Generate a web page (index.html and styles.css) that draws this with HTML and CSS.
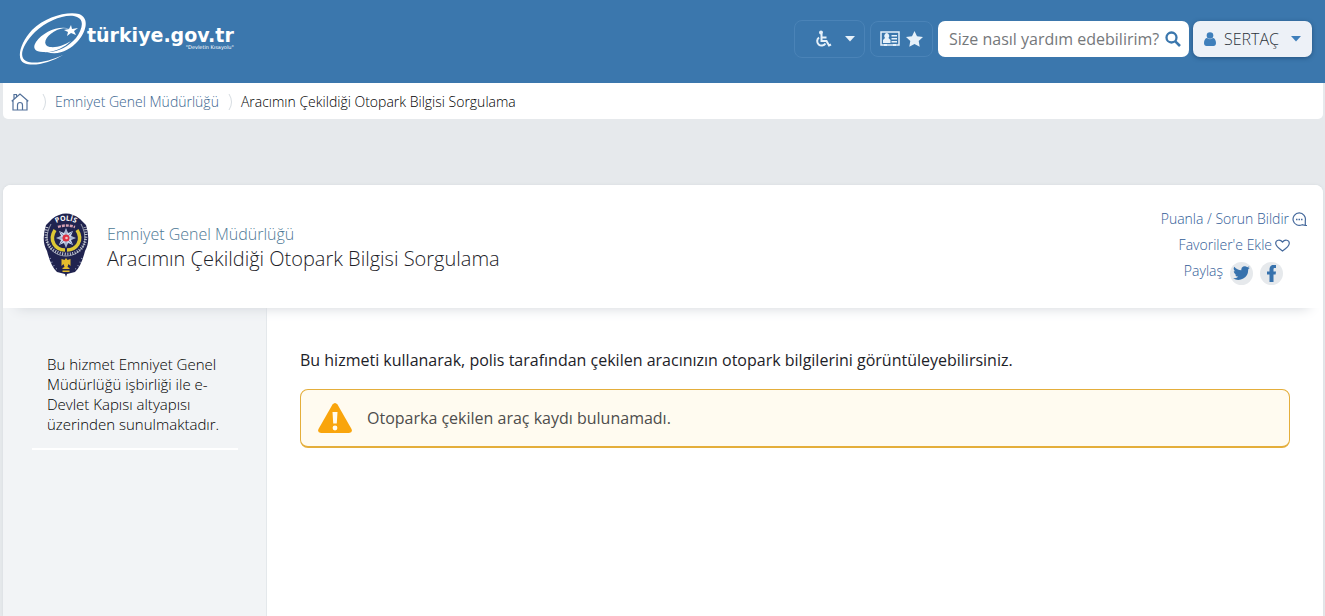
FILE: index.html
```html
<!DOCTYPE html>
<html lang="tr">
<head>
<meta charset="utf-8">
<meta name="viewport" content="width=device-width, initial-scale=1">
<title>Aracımın Çekildiği Otopark Bilgisi Sorgulama</title>
<link rel="stylesheet" href="styles.css">
</head>
<body>
<header class="topbar">
  <a class="brand" href="#" aria-label="türkiye.gov.tr">
    <svg class="brand-mark" viewBox="0 0 68 54" aria-hidden="true">
      <path fill="#fff" d="M44 43C31 51 14 55 5 51C-3 47 1 31 13 18C26 5 48-1 60 2C71 6 67 20 59 29C51 38 39 44 28 40C37 41 49 35 57 26C63 18 66 8 58 5C48 1 29 8 16 20C4 32-1 45 7 49C15 53 31 49 44 43Z"/>
      <path fill="#fff" d="M51 17C40 13 24 20 17 30C13 36 16 40 24 40C34 41 45 36 52 29C44 34 34 37 28 34C23 30 29 22 38 18C43 16 47 16 51 17Z"/>
      <path fill="#fff" d="M52 13L53 17L59 16L55 19L57 23L52 21L48 24L49 20L45 18L50 17Z"/>
    </svg>
    <span class="brand-text">
      <span class="brand-name">türkiye.gov.tr</span>
      <span class="brand-motto">"Devletin Kısayolu"</span>
    </span>
  </a>
  <div class="tools">
    <button class="ghost ghost-access" type="button" aria-label="Erişilebilirlik">
      <svg width="18" height="18" viewBox="0 0 18 18" fill="none" stroke="#e6f1fa" stroke-width="2" aria-hidden="true"><circle cx="7" cy="2.500" r="2" fill="#e6f1fa" stroke="none"/><path d="M7.500 4v7h5l2.500 4.500 2-1M8 7.500h4.500M5 7.500a4.500 4.500 0 1 0 6.500 6"/></svg>
      <svg width="10" height="6" viewBox="0 0 10 6" aria-hidden="true"><path fill="#e6f1fa" d="M0 0h10L5 5.500z"/></svg>
    </button>
    <button class="ghost ghost-card" type="button" aria-label="Kartım ve favorilerim">
      <svg width="20" height="16" viewBox="0 0 20 16" aria-hidden="true"><path fill="none" stroke="#e6f1fa" stroke-width="1.500" d="M1 1h18v13H1z"/><path fill="#e6f1fa" d="M3 12V9l2-2a2.500 2.800 0 1 1 3.500 0l2 2v3zM11.500 4H17v1.500h-5.500zM11.500 7H17v1.500h-5.500zM11.500 10H17v1.500h-5.500zM4 13h3v2H4zM13 13h3v2h-3z"/></svg>
      <svg width="17" height="16" viewBox="0 0 17 16" aria-hidden="true"><path fill="#e6f1fa" d="M8.500 0l2.500 5.200 6 .8-4.300 4 1 5.800-5.200-2.800-5.200 2.800 1-5.800L0 6l6-.8z"/></svg>
    </button>
    <form class="search">
      <input class="search-input" type="text" aria-label="Arama" placeholder="Size nasıl yardım edebilirim?">
      <button class="search-button" type="button" aria-label="Ara">
        <svg width="16" height="16" viewBox="0 0 16 16" fill="none" stroke="#3b77ad" aria-hidden="true"><circle cx="6.500" cy="6.500" r="5" stroke-width="2.300"/><path stroke-width="2.600" d="M10.300 10.300L15 15"/></svg>
      </button>
    </form>
    <button class="user" type="button">
      <svg width="12" height="14" viewBox="0 0 12 14" aria-hidden="true"><circle cx="6" cy="3.500" r="3.300" fill="#3f7fbb"/><path fill="#3f7fbb" d="M0 11C0 8 1.500 6 3 6c1.800 1.500 4.200 1.500 6 0 1.500 0 3 2 3 5 0 2-1 3-2.500 3h-7C1 14 0 13 0 11z"/></svg>
      <span class="user-name">SERTAÇ</span>
      <svg width="10" height="6" viewBox="0 0 10 6" aria-hidden="true"><path fill="#3f7fbb" d="M0 0h10L5 5.500z"/></svg>
    </button>
  </div>
</header>

<div class="page">
  <nav class="crumbs" aria-label="Konum">
    <a class="home" href="#" aria-label="Ana sayfa">
      <svg width="18" height="18" viewBox="0 0 18 18" fill="none" stroke="#53719a" stroke-width="1.200" aria-hidden="true"><path d="M.7 8.300L9 1l8.300 7.300M2 7.500V17h14V7.500M6.500 17v-5a2.500 2.500 0 0 1 5 0v5M3 6V1.500h2.500V4"/></svg>
    </a>
    <svg class="sep" width="5" height="18" viewBox="0 0 5 18" fill="none" stroke="#d7dde2" aria-hidden="true"><path d="M1 1q5 8 0 16"/></svg>
    <a class="crumb" href="#">Emniyet Genel Müdürlüğü</a>
    <svg class="sep" width="5" height="18" viewBox="0 0 5 18" fill="none" stroke="#d7dde2" aria-hidden="true"><path d="M1 1q5 8 0 16"/></svg>
    <span class="crumb-current">Aracımın Çekildiği Otopark Bilgisi Sorgulama</span>
  </nav>

  <main class="card">
    <div class="title-bar">
      <svg class="badge" viewBox="0 0 46 64" role="img" aria-label="Polis">
        <defs><path id="badge-arc" d="M8 14Q23 1 38 14"/></defs>
        <path fill="#20234f" d="M9 6Q23-5 37 6L43 12Q48 28 42 38Q38 54 32 59L24 61L23 64L22 61L14 59Q8 54 4 38Q-2 28 3 12Z"/>
        <path fill="none" stroke="#989eae" stroke-width="1" d="M8 11C-3 32 11 43 23 43S49 32 38 11"/>
        <path fill="none" stroke="#c3c7d2" stroke-width="3" stroke-dasharray="1 1.500" d="M4 14C0 31 9 40 23 41S46 31 42 14"/>
        <text class="badge-word"><textPath href="#badge-arc" startOffset="50%">POLİS</textPath></text>
        <path fill="none" stroke="#ddc735" stroke-width="3.500" d="M12 17C5 28 13 37 22 37M34 17C41 28 33 37 24 37"/>
        <path fill="none" stroke="#d6a2b3" stroke-width="2.500" stroke-dasharray="3 1" d="M15 14Q23 11 32 14"/>
        <path fill="#c9d5e8" d="M23 15l2 5 5-2-2 5 5 2-5 2 2 5-5-2-2 5-2-5-5 2 2-5-5-2 5-2-2-5 5 2z"/>
        <path stroke="#6879a9" stroke-width=".7" d="M23 16v18M14 25h18M17 19l12 12M29 19L17 31"/>
        <circle cx="23" cy="25" r="3.500" fill="#df3142"/><circle cx="23.500" cy="25" r="1.300" fill="#f0c3c8"/>
        <path fill="#e4bd2e" d="M23 45l1.500 2 3-1v7l-2-2-1 3 2 1v1h-7v-1l2-1-1-3-2 2v-7l3 1zM19.500 57.500h7v1.500h-7z"/>
        <path fill="none" stroke="#8e96b4" stroke-width="1.500" stroke-dasharray="1 3" d="M7 45q5 12 9 12M39 45q-5 12-9 12"/>
      </svg>
      <h1 class="title">
        <span class="agency">Emniyet Genel Müdürlüğü</span>
        <span class="service">Aracımın Çekildiği Otopark Bilgisi Sorgulama</span>
      </h1>
      <div class="actions">
        <a class="action" href="#">Puanla / Sorun Bildir
          <svg width="15" height="15" viewBox="0 0 15 15" fill="none" stroke="#45699c" stroke-width="1.200" aria-hidden="true"><path d="M10 12.700A6.200 6.200 0 1 1 13.300 8.500V13.500H15M10 12.700l3.300.8"/><path stroke-width="1.500" stroke-dasharray="1.500 1" d="M4 7.500h7"/></svg>
        </a>
        <a class="action action-inset" href="#">Favoriler'e Ekle
          <svg width="15" height="13" viewBox="0 0 15 13" fill="none" stroke="#45699c" stroke-width="1.200" aria-hidden="true"><path d="M7.500 12C4 9.500.7 7 .7 4.200.7 1 5 0 7.500 3 10 0 14.300 1 14.300 4.200 14.300 7 11 9.500 7.500 12z"/></svg>
        </a>
        <div class="share">
          <span class="share-label">Paylaş</span>
          <a class="social" href="#" aria-label="Twitter"><svg width="17" height="14" viewBox="0 0 24 20" aria-hidden="true"><path fill="#3772ad" d="M24 2.400a10 10 0 0 1-2.800.8A5 5 0 0 0 23.300.5a10 10 0 0 1-3.100 1.200 5 5 0 0 0-8.400 4.500A14 14 0 0 1 1.700 1a5 5 0 0 0 1.500 6.600A5 5 0 0 1 1 7a5 5 0 0 0 4 4.900 5 5 0 0 1-2.300.1 5 5 0 0 0 4.600 3.400A10 10 0 0 1 0 17.500 14 14 0 0 0 21.500 5z"/></svg></a>
          <a class="social" href="#" aria-label="Facebook"><svg width="9" height="17" viewBox="0 0 9 17" aria-hidden="true"><path fill="#3772ad" d="M2.500 17V9.500H0v-3h2.500V4.500C2.500 1.500 4 0 6.500 0H9v3H7.500C6.700 3 6.500 3.500 6.500 4.500v2H9l-.4 3H6.500V17z"/></svg></a>
        </div>
      </div>
    </div>

    <div class="body">
      <aside class="side">
        <p class="side-note">Bu hizmet Emniyet Genel Müdürlüğü işbirliği ile e-Devlet Kapısı altyapısı üzerinden sunulmaktadır.</p>
      </aside>
      <section class="content">
        <p class="intro">Bu hizmeti kullanarak, polis tarafından çekilen aracınızın otopark bilgilerini görüntüleyebilirsiniz.</p>
        <div class="warning" role="status">
          <svg width="34" height="30" viewBox="0 0 34 30" aria-hidden="true"><path fill="#f9a50c" d="M14.500 1.500Q17-1.500 19.500 1.500L33.500 26Q35 29.500 31 30H3Q-1 29.500.5 26z"/><path fill="#fffbee" d="M14.500 9h5l-.7 11.500h-3.600z"/><circle cx="17" cy="25" r="2.400" fill="#fffbee"/></svg>
          <span>Otoparka çekilen araç kaydı bulunamadı.</span>
        </div>
      </section>
    </div>
  </main>
</div>
</body>
</html>
```
FILE: styles.css
```css
* { box-sizing: border-box; }
html { height: 100%; }
body {
  margin: 0;
  min-height: 100%;
  display: flex;
  flex-direction: column;
  background: #e6e9ec;
  color: #1d2228;
  font-family: "Open Sans", "Noto Sans", sans-serif;
  font-size: 14px;
  line-height: 20px;
}
a { color: #315c97; text-decoration: none; }
button, input { font: inherit; border: 0; padding: 0; }
button { cursor: pointer; }
svg { display: block; flex: none; }

.topbar {
  display: flex;
  justify-content: space-between;
  align-items: flex-start;
  padding: 12px 13px 12px 19px;
  min-height: 83px;
  background: #3b77ad;
}
.brand { display: flex; color: #fff; }
.brand-mark { width: 68px; height: 54px; }
.brand-text { display: flex; flex-direction: column; padding-top: 14px; }
.brand-name { font: bold 19px/18px "DejaVu Sans", sans-serif; }
.brand-motto {
  align-self: flex-end;
  font: 5px/6px "DejaVu Sans", sans-serif;
}

.tools { display: flex; gap: 5px; padding-top: 8px; }
.ghost {
  display: flex;
  align-items: center;
  justify-content: center;
  border: 1px solid #4a83b7;
  border-radius: 8px;
  background: transparent;
}
.ghost-access { width: 71px; height: 38px; gap: 13px; padding-left: 9px; }
.ghost-card { width: 63px; height: 36px; gap: 6px; margin-top: 1px; }
.search {
  display: flex;
  align-items: center;
  width: 251px;
  height: 36px;
  margin: 1px -1px 0 0;
  padding: 0 8px 0 11px;
  border-radius: 7px;
  background: #fff;
}
.search-input { flex: 1; min-width: 0; background: transparent; font-size: 16px; outline: 0; }
.search-input::placeholder { color: #75787b; opacity: 1; }
.search-button { background: transparent; }
.user {
  display: flex;
  align-items: center;
  width: 119px;
  height: 36px;
  margin-top: 1px;
  padding: 0 11px;
  border-radius: 7px;
  background: #edf1f7;
  color: #2c333b;
  font-size: 16px;
  box-shadow: 0 1px 4px #24527f;
}
.user-name { flex: 1; text-align: left; padding-left: 8px; font-weight: 300; }

.page { flex: 1; display: flex; flex-direction: column; padding: 0 2px 0 3px; }
.crumbs {
  display: flex;
  align-items: center;
  min-height: 36px;
  padding: 1px 8px 0;
  background: #fff;
  border-radius: 0 0 5px 5px;
  font-weight: 300;
}
.sep { margin: 0 8px 0 13px; }
.crumb + .sep { margin-left: 9px; }
.crumb { color: #3a668f; }
.crumb-current { color: #000; }

.card {
  flex: 1;
  display: flex;
  flex-direction: column;
  margin-top: 66px;
  border-radius: 8px 8px 0 0;
  background: #fff;
  box-shadow: 0 0 3px #d3d8dc;
}
.title-bar {
  display: flex;
  align-items: flex-start;
  padding: 20px 16px 20px 40px;
  min-height: 123px;
  position: relative;
  z-index: 1;
  background: #fff;
  border-radius: 8px 8px 0 0;
  box-shadow: 0 14px 12px -14px #d0d4d9;
}
.badge { width: 46px; height: 64px; margin-top: 8px; }
.badge-word { fill: #fff; font: bold 7px "Open Sans", sans-serif; text-anchor: middle; }
.title { flex: 1; display: flex; flex-direction: column; margin: 18px 0 0 18px; font-weight: 300; }
.agency { font-size: 16px; line-height: 22px; color: #4d7895; }
.service { font-size: 20px; line-height: 28px; }
.actions { display: flex; flex-direction: column; align-items: flex-end; gap: 6px; padding-top: 4px; font-weight: 300; }
.action { display: flex; align-items: center; gap: 3px; }
.action-inset { margin-right: 17px; }
.share { display: flex; align-items: center; gap: 7px; margin-right: 24px; height: 24px; }
.share-label { color: #315c97; margin-top: -4px; }
.social {
  display: flex;
  align-items: center;
  justify-content: center;
  width: 23px;
  height: 23px;
  border-radius: 50%;
  background: #e6e9ec;
}

.body { flex: 1; display: flex; }
.side {
  width: 264px;
  padding: 46px 28px 0 29px;
  background: #f2f4f6;
  border-right: 1px solid #e4e8eb;
}
.side-note {
  margin: 0;
  padding: 0 16px 14px 15px;
  border-bottom: 2px solid #fff;
  color: #000;
  font-size: 15px;
  font-weight: 300;
}
.content { flex: 1; padding: 40px 33px 0; }
.intro { margin: 0; font-size: 16px; line-height: 24px; }
.warning {
  display: flex;
  align-items: center;
  gap: 15px;
  min-height: 59px;
  margin-top: 17px;
  padding: 0 17px;
  border: 1px solid #e4ae3b;
  border-bottom-width: 2px;
  border-radius: 8px;
  background: #fffbf0;
  color: #4d4d4c;
  font-size: 16px;
}
```
